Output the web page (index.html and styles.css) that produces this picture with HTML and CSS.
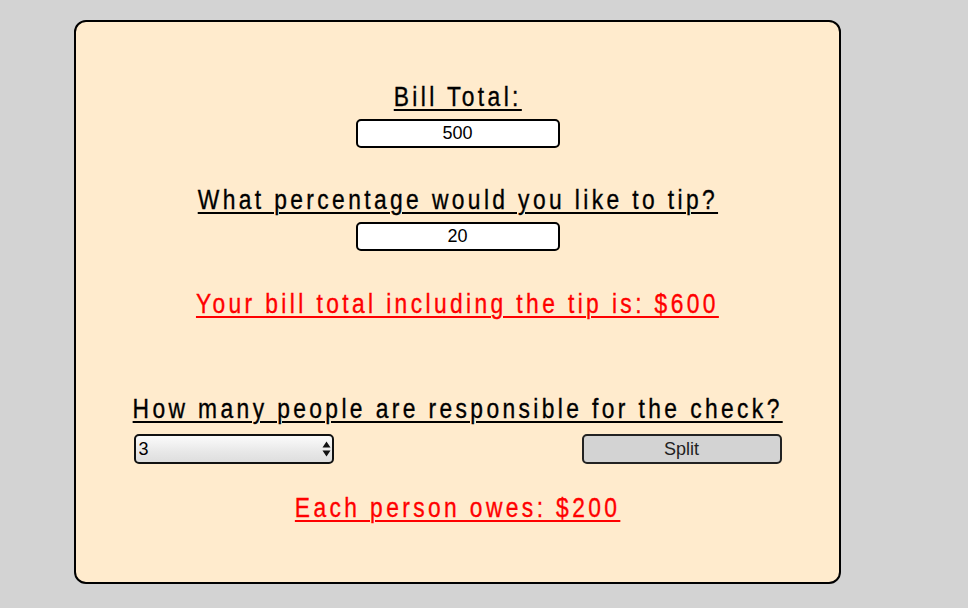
FILE: index.html
```html
<!DOCTYPE html>
<html>
<head>
<meta charset="utf-8">
<link rel="stylesheet" href="styles.css">
</head>
<body>
<div class="card">
  <div class="label">Bill Total:</div>
  <input class="field field-first" type="text" value="500">
  <div class="label label-gap">What percentage would you like to tip?</div>
  <input class="field" type="text" value="20">
  <div class="label result result-tip">Your bill total including the tip is: $600</div>
  <div class="split-block">
    <div class="label label-wide">How many people are responsible for the check?</div>
    <div class="split-row">
      <div class="select-wrap">
        <select class="people"><option>3</option></select>
        <svg class="arrows" width="9" height="16" viewBox="0 0 9 16"><path d="M4.5 0.5 L8.5 6.5 L0.5 6.5 Z M4.5 15.5 L8.5 9.5 L0.5 9.5 Z" fill="#111"/></svg>
      </div>
      <button class="split-btn">Split</button>
    </div>
  </div>
  <div class="label result result-each">Each person owes: $200</div>
</div>
</body>
</html>
```
FILE: styles.css
```css
html, body {
  margin: 0;
  padding: 0;
  background: #d3d3d3;
}
body {
  padding: 20px 0 0 74px;
  height: 608px;
  box-sizing: border-box;
}
.card {
  box-sizing: border-box;
  width: 767px;
  height: 564px;
  background: #ffebcd;
  border: 2px solid #000;
  border-radius: 12px;
  padding-top: 60px;
  display: flex;
  flex-direction: column;
  align-items: center;
}
.label {
  font-family: "Liberation Sans", Arial, sans-serif;
  font-size: 27px;
  line-height: 30px;
  letter-spacing: 4px;
  text-decoration: underline;
  text-decoration-thickness: 2px;
  text-underline-offset: 3px;
  color: #000;
  white-space: nowrap;
  -webkit-text-stroke: 0.35px currentColor;
  transform: scaleX(0.845);
  transform-origin: center;
}
.label-wide {
  align-self: center;
}
.label-gap { margin-top: 37px; }
.field {
  box-sizing: border-box;
  width: 204px;
  height: 29px;
  margin-top: 7px;
  border: 2px solid #000;
  border-radius: 5px;
  background: #fff;
  text-align: center;
  font-family: "Liberation Sans", Arial, sans-serif;
  font-size: 18px;
  color: #000;
  padding: 0;
  outline: none;
}
.result { color: #ff0000; }
.result-tip { margin-top: 38px; }
.split-block {
  margin-top: 75px;
  width: 648px;
  display: flex;
  flex-direction: column;
}
.split-row {
  margin-top: 10px;
  display: flex;
  justify-content: space-between;
}
.select-wrap {
  position: relative;
  width: 200px;
  height: 30px;
}
.people {
  appearance: none;
  -webkit-appearance: none;
  box-sizing: border-box;
  width: 200px;
  height: 30px;
  border: 2px solid #111;
  border-radius: 5px;
  background: linear-gradient(#fbfbfb, #e8e8e8 60%, #dedede);
  font-family: "Liberation Sans", Arial, sans-serif;
  font-size: 18px;
  color: #000;
  padding: 0 0 0 3px;
  margin: 0;
  outline: none;
}
.arrows {
  position: absolute;
  right: 3px;
  top: 7px;
}
.split-btn {
  box-sizing: border-box;
  width: 200px;
  height: 30px;
  border: 2px solid #222;
  border-radius: 5px;
  background: #d3d3d3;
  font-family: "Liberation Sans", Arial, sans-serif;
  font-size: 18px;
  color: #222;
  padding: 0;
  margin: 0;
}
.result-each { margin-top: 29px; }
```
